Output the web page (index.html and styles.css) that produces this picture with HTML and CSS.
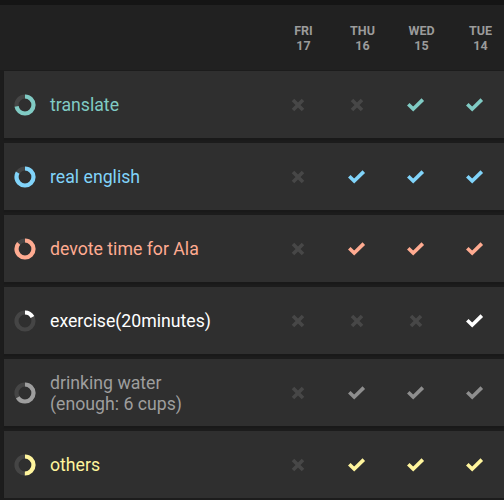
FILE: index.html
```html
<!DOCTYPE html>
<html lang="en">
<head>
    <meta charset="UTF-8">
    <meta name="viewport" content="width=device-width, initial-scale=1.0">
    <title>Habits</title>
    <link rel="stylesheet" href="styles.css">
</head>
<body>

<div class="topbar"></div>

<div class="header">
    <div class="days">
        <div class="day">FRI<br>17</div>
        <div class="day">THU<br>16</div>
        <div class="day">WED<br>15</div>
        <div class="day">TUE<br>14</div>
    </div>
</div>

<div class="habits" id="habits"></div>

<script>
    // Each habit: name, colour class, score (0..1), marks for FRI THU WED TUE
    const habits = [
        { name: "translate", color: "teal", score: 0.72, marks: [0, 0, 1, 1] },
        { name: "real english", color: "blue", score: 0.83, marks: [0, 1, 1, 1] },
        { name: "devote time for Ala", color: "salmon", score: 0.86, marks: [0, 1, 1, 1] },
        { name: "exercise(20minutes)", color: "white", score: 0.17, marks: [0, 0, 0, 1] },
        { name: "drinking water<br>(enough: 6 cups)", color: "grey", score: 0.66, marks: [0, 1, 1, 1] },
        { name: "others", color: "yellow", score: 0.5, marks: [0, 1, 1, 1] }
    ];

    const CIRC = 2 * Math.PI * 8.5;

    const checkSvg = '<svg width="19" height="15" viewBox="0 0 19 15"><path d="M2.3 7.2 L7.2 12 L16.8 2.6" fill="none" stroke="currentColor" stroke-width="3.6"/></svg>';
    const crossSvg = '<svg width="14" height="14" viewBox="0 0 14 14"><path d="M2 2 L12 12 M12 2 L2 12" fill="none" stroke="currentColor" stroke-width="3.6"/></svg>';

    function ring(score) {
        const len = (score * CIRC).toFixed(2);
        return `<svg class="ring" width="22" height="22" viewBox="0 0 22 22">
            <circle cx="11" cy="11" r="8.5" class="track"/>
            <circle cx="11" cy="11" r="8.5" class="arc" stroke-dasharray="${len} ${CIRC}" transform="rotate(-90 11 11)"/>
        </svg>`;
    }

    const list = document.getElementById("habits");
    habits.forEach(h => {
        const row = document.createElement("div");
        row.className = "habit " + h.color;
        const marks = h.marks.map(m =>
            `<div class="mark ${m ? 'done' : 'miss'}">${m ? checkSvg : crossSvg}</div>`
        ).join("");
        row.innerHTML = `
            <div class="icon">${ring(h.score)}</div>
            <div class="name">${h.name}</div>
            <div class="marks">${marks}</div>`;
        list.appendChild(row);
    });
</script>

</body>
</html>
```

FILE: styles.css
```css
body {
    margin: 0;
    background-color: #1c1c1c;
    font-family: Roboto, "Noto Sans", sans-serif;
    overflow: hidden;
}

.topbar {
    height: 5px;
    background-color: #151515;
}

.header {
    height: 65px;
    background-color: #212121;
    display: flex;
    justify-content: flex-end;
    align-items: center;
}

.days {
    display: flex;
    margin-right: -6px;
}

.day {
    width: 59px;
    text-align: center;
    font-size: 12.5px;
    font-weight: bold;
    line-height: 15px;
    color: #9b9b9b;
}

.habits {
    display: flex;
    flex-direction: column;
    gap: 5px;
    padding-left: 4px;
    padding-top: 1px;
}

.habit {
    height: 67px;
    background-color: #2f2f2f;
    box-shadow: 0 2px 1px #191919;
    display: flex;
    align-items: center;
}

.icon {
    width: 22px;
    height: 22px;
    margin-left: 10px;
    margin-right: 14px;
    padding-top: 1px;
}

.ring circle {
    fill: none;
    stroke-width: 4.2;
}

.ring .track {
    stroke: #454545;
}

.ring .arc {
    stroke: currentColor;
}

.name {
    flex: 1;
    font-size: 17.7px;
    line-height: 21px;
    padding-top: 2px;
}

.marks {
    display: flex;
}

.mark {
    width: 59px;
    height: 20px;
    display: flex;
    justify-content: center;
    align-items: center;
}

.mark.miss {
    color: #474747;
}

.teal { color: #80cbc4; }
.blue { color: #81d4fa; }
.salmon { color: #ffab91; }
.white { color: #ffffff; }
.grey { color: #9e9e9e; }
.grey .mark.done { color: #8e8e8e; }
.yellow { color: #fff59d; }
```
